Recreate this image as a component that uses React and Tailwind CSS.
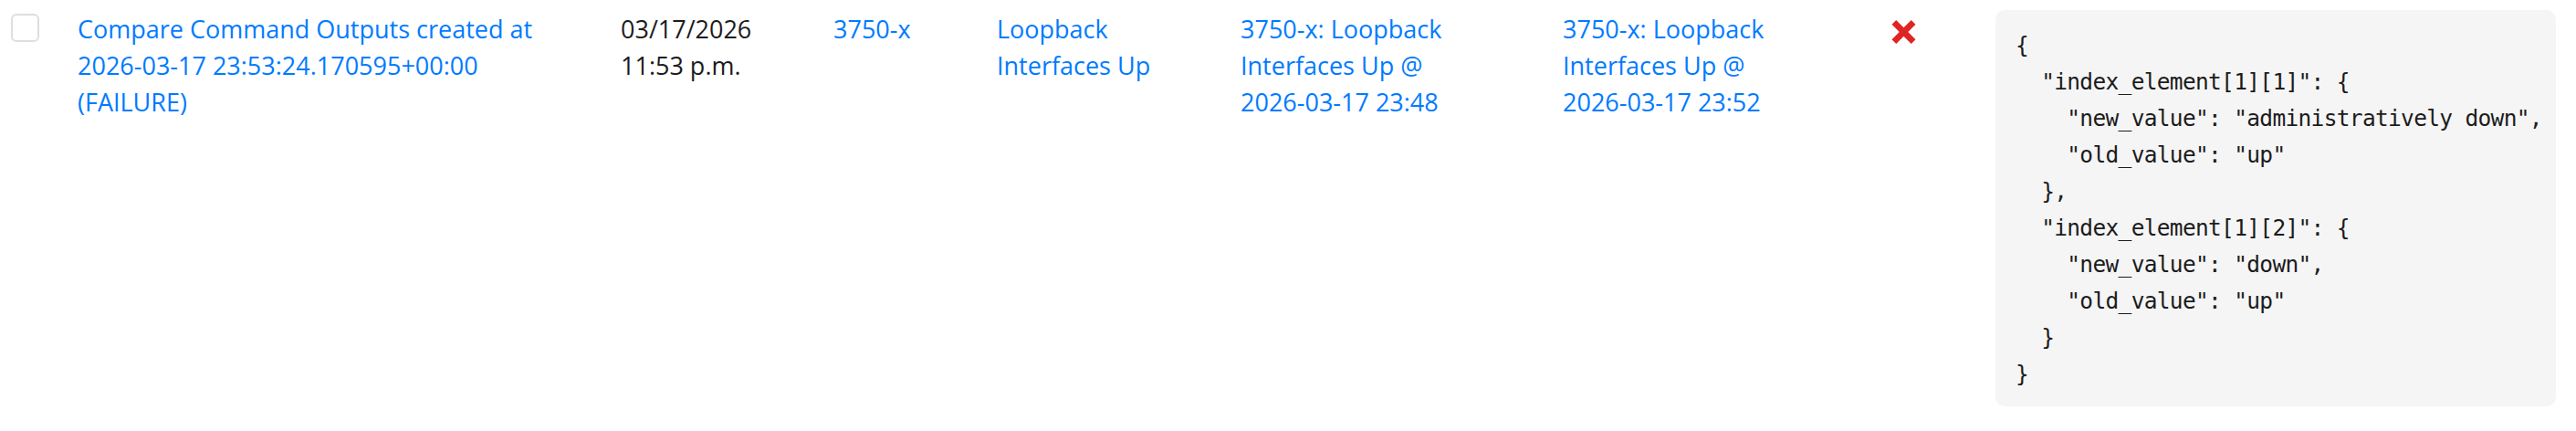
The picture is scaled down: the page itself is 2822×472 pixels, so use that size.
import React from 'react';

const diff = `{
  "index_element[1][1]": {
    "new_value": "administratively down",
    "old_value": "up"
  },
  "index_element[1][2]": {
    "new_value": "down",
    "old_value": "up"
  }
}`;

// one result row of the compare-command job table
const App = () => {
  return (
    <div className="w-[2822px] h-[472px] bg-white font-['Open_Sans',sans-serif] text-[27px] leading-[40px] text-[#1c1c1c]">
      <div className="flex items-start">
        {/* select checkbox */}
        <div className="w-[85px] shrink-0 pl-[12px] pt-[15px]">
          <div className="w-[31px] h-[31px] rounded-[6px] border-2 border-[#dedede] bg-white" />
        </div>

        <div className="w-[595px] shrink-0 pt-[12px] whitespace-nowrap">
          <a href="#" className="text-[#007bff]">
            Compare Command Outputs created at<br />
            2026-03-17 23:53:24.170595+00:00<br />
            (FAILURE)
          </a>
        </div>

        <div className="w-[233px] shrink-0 pt-[12px] whitespace-nowrap">
          03/17/2026<br />11:53 p.m.
        </div>

        <div className="w-[179px] shrink-0 pt-[12px] whitespace-nowrap">
          <a href="#" className="text-[#007bff]">3750-x</a>
        </div>

        <div className="w-[267px] shrink-0 pt-[12px] whitespace-nowrap">
          <a href="#" className="text-[#007bff]">
            Loopback<br />Interfaces Up
          </a>
        </div>

        <div className="w-[353px] shrink-0 pt-[12px] whitespace-nowrap">
          <a href="#" className="text-[#007bff]">
            3750-x: Loopback<br />Interfaces Up @<br />2026-03-17 23:48
          </a>
        </div>

        <div className="w-[360px] shrink-0 pt-[12px] whitespace-nowrap">
          <a href="#" className="text-[#007bff]">
            3750-x: Loopback<br />Interfaces Up @<br />2026-03-17 23:52
          </a>
        </div>

        {/* status */}
        <div className="w-[114px] shrink-0 pt-[22px]">
          <svg width="27" height="26" viewBox="4 4 16 16" className="block">
            <path
              fill="#e02424"
              d="M20 6.91L17.09 4L12 9.09L6.91 4L4 6.91L9.09 12L4 17.09L6.91 20L12 14.91L17.09 20L20 17.09L14.91 12L20 6.91Z"
            />
          </svg>
        </div>

        {/* diff output */}
        <div className="w-[614px] shrink-0 pt-[11px]">
          <pre className="bg-[#f5f5f5] rounded-[10px] pl-[22px] pt-[19px] pb-[15px] font-['DejaVu_Sans_Mono',monospace] text-[24.5px] tracking-[-0.68px] leading-[40px] text-[#1c1c1c] whitespace-pre">
            {diff}
          </pre>
        </div>
      </div>
    </div>
  );
};

export default App;
